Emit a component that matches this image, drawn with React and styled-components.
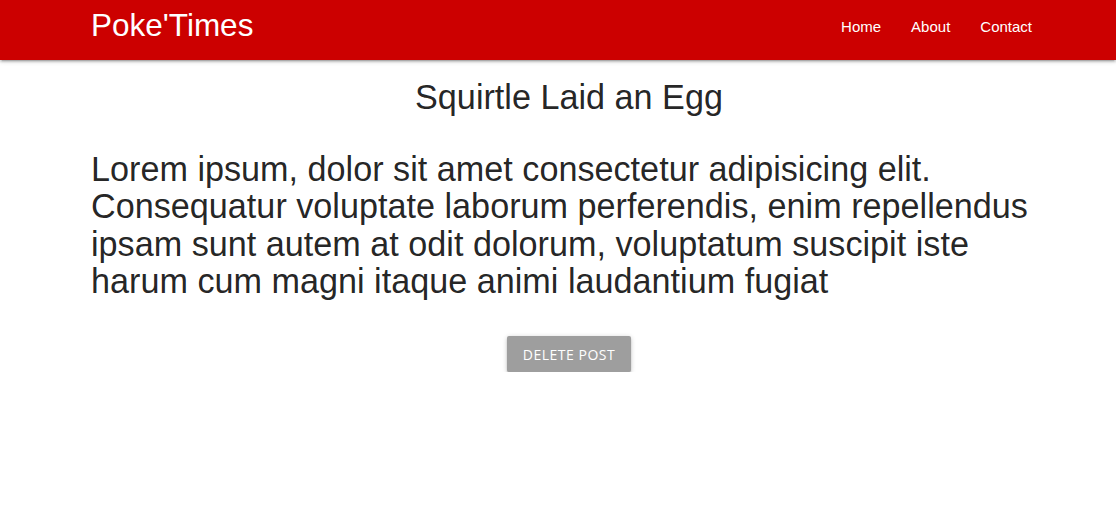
import React from "react";
import styled, { createGlobalStyle } from "styled-components";

const GlobalStyle = createGlobalStyle`
  body {
    margin: 0;
    background: #fff;
    font-family: "Liberation Sans", Arial, sans-serif;
    color: rgba(0, 0, 0, 0.87);
  }
  * {
    box-sizing: border-box;
  }
`;

const App = () => {
  return (
    <div>
      <GlobalStyle />
      <Nav>
        <NavInner>
          <Brand href="#">Poke'Times</Brand>
          <Links>
            <li>
              <a href="#">Home</a>
            </li>
            <li>
              <a href="#">About</a>
            </li>
            <li>
              <a href="#">Contact</a>
            </li>
          </Links>
        </NavInner>
      </Nav>
      <Container>
        <Post>
          <Title>Squirtle Laid an Egg</Title>
          <Body>
            Lorem ipsum, dolor sit amet consectetur adipisicing elit.
            Consequatur voluptate laborum perferendis, enim repellendus ipsam
            sunt autem at odit dolorum, voluptatum suscipit iste harum cum magni
            itaque animi laudantium fugiat
          </Body>
          <Center>
            <Button>Delete Post</Button>
          </Center>
        </Post>
      </Container>
    </div>
  );
};

// Style
const Nav = styled.nav`
  height: 60px;
  background-color: #cc0000;
  box-shadow: 0 2px 2px 0 rgba(0, 0, 0, 0.14), 0 3px 1px -2px rgba(0, 0, 0, 0.12),
    0 1px 5px 0 rgba(0, 0, 0, 0.2);
`;

const NavInner = styled.div`
  height: 100%;
  padding: 0 69px 0 91px;
  display: flex;
  align-items: center;
  justify-content: space-between;
`;

const Brand = styled.a`
  color: #fff;
  text-decoration: none;
  font-size: 31.5px;
  line-height: 1;
  margin-top: -9px;
`;

const Links = styled.ul`
  display: flex;
  list-style: none;
  margin: -6px 0 0;
  padding: 0;
  li a {
    display: block;
    padding: 0 15px;
    color: #fff;
    text-decoration: none;
    font-size: 15px;
    line-height: 46px;
  }
`;

const Container = styled.div`
  padding: 0 69px 0 91px;
`;

const Post = styled.div`
  padding-top: 19.4px;
`;

const Title = styled.h4`
  text-align: center;
  font-weight: 400;
  font-size: 34.2px;
  line-height: 1.1;
  margin: 0 0 33.6px;
`;

const Body = styled.p`
  font-size: 34.2px;
  line-height: 1.1;
  margin: 0;
`;

const Center = styled.div`
  display: flex;
  justify-content: center;
  margin-top: 35px;
`;

const Button = styled.button`
  height: 36px;
  padding: 0 16px;
  border: none;
  border-radius: 2px;
  background-color: #9e9e9e;
  color: #fff;
  font-family: "Open Sans", sans-serif;
  font-size: 14px;
  letter-spacing: 0.5px;
  text-transform: uppercase;
  cursor: pointer;
  box-shadow: 0 2px 2px 0 rgba(0, 0, 0, 0.14), 0 3px 1px -2px rgba(0, 0, 0, 0.12),
    0 1px 5px 0 rgba(0, 0, 0, 0.2);
`;

export default App;
